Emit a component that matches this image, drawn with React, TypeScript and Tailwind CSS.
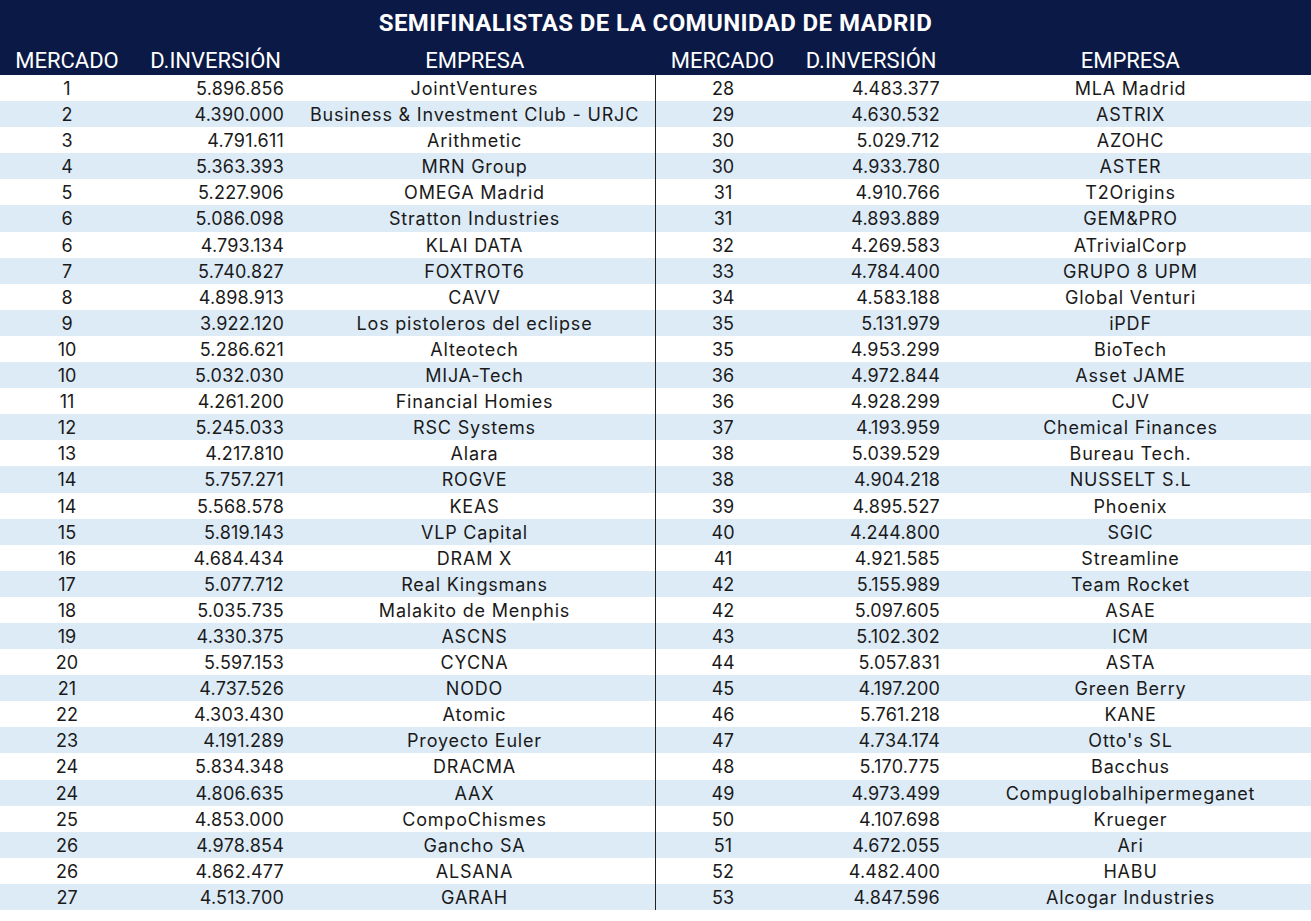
import React from 'react';

type Row = [string, string, string];

const left: Row[] = [
  ['1', '5.896.856', 'JointVentures'],
  ['2', '4.390.000', 'Business & Investment Club - URJC'],
  ['3', '4.791.611', 'Arithmetic'],
  ['4', '5.363.393', 'MRN Group'],
  ['5', '5.227.906', 'OMEGA Madrid'],
  ['6', '5.086.098', 'Stratton Industries'],
  ['6', '4.793.134', 'KLAI DATA'],
  ['7', '5.740.827', 'FOXTROT6'],
  ['8', '4.898.913', 'CAVV'],
  ['9', '3.922.120', 'Los pistoleros del eclipse'],
  ['10', '5.286.621', 'Alteotech'],
  ['10', '5.032.030', 'MIJA-Tech'],
  ['11', '4.261.200', 'Financial Homies'],
  ['12', '5.245.033', 'RSC Systems'],
  ['13', '4.217.810', 'Alara'],
  ['14', '5.757.271', 'ROGVE'],
  ['14', '5.568.578', 'KEAS'],
  ['15', '5.819.143', 'VLP Capital'],
  ['16', '4.684.434', 'DRAM X'],
  ['17', '5.077.712', 'Real Kingsmans'],
  ['18', '5.035.735', 'Malakito de Menphis'],
  ['19', '4.330.375', 'ASCNS'],
  ['20', '5.597.153', 'CYCNA'],
  ['21', '4.737.526', 'NODO'],
  ['22', '4.303.430', 'Atomic'],
  ['23', '4.191.289', 'Proyecto Euler'],
  ['24', '5.834.348', 'DRACMA'],
  ['24', '4.806.635', 'AAX'],
  ['25', '4.853.000', 'CompoChismes'],
  ['26', '4.978.854', 'Gancho SA'],
  ['26', '4.862.477', 'ALSANA'],
  ['27', '4.513.700', 'GARAH'],
];

const right: Row[] = [
  ['28', '4.483.377', 'MLA Madrid'],
  ['29', '4.630.532', 'ASTRIX'],
  ['30', '5.029.712', 'AZOHC'],
  ['30', '4.933.780', 'ASTER'],
  ['31', '4.910.766', 'T2Origins'],
  ['31', '4.893.889', 'GEM&PRO'],
  ['32', '4.269.583', 'ATrivialCorp'],
  ['33', '4.784.400', 'GRUPO 8 UPM'],
  ['34', '4.583.188', 'Global Venturi'],
  ['35', '5.131.979', 'iPDF'],
  ['35', '4.953.299', 'BioTech'],
  ['36', '4.972.844', 'Asset JAME'],
  ['36', '4.928.299', 'CJV'],
  ['37', '4.193.959', 'Chemical Finances'],
  ['38', '5.039.529', 'Bureau Tech.'],
  ['38', '4.904.218', 'NUSSELT S.L'],
  ['39', '4.895.527', 'Phoenix'],
  ['40', '4.244.800', 'SGIC'],
  ['41', '4.921.585', 'Streamline'],
  ['42', '5.155.989', 'Team Rocket'],
  ['42', '5.097.605', 'ASAE'],
  ['43', '5.102.302', 'ICM'],
  ['44', '5.057.831', 'ASTA'],
  ['45', '4.197.200', 'Green Berry'],
  ['46', '5.761.218', 'KANE'],
  ['47', '4.734.174', "Otto's SL"],
  ['48', '5.170.775', 'Bacchus'],
  ['49', '4.973.499', 'Compuglobalhipermeganet'],
  ['50', '4.107.698', 'Krueger'],
  ['51', '4.672.055', 'Ari'],
  ['52', '4.482.400', 'HABU'],
  ['53', '4.847.596', 'Alcogar Industries'],
];

const HalfTable = ({ rows, divider }: { rows: Row[]; divider?: boolean }) => (
  <div className={`flex-1 flex flex-col ${divider ? 'border-l border-[#222]' : ''}`}>
    {rows.map((r, i) => (
      <div
        key={i}
        className={`grid grid-cols-[134px_160px_1fr] h-[26.1px] items-center ${i % 2 === 1 ? 'bg-[#ddebf7]' : 'bg-white'}`}
      >
        <div className="text-center">{r[0]}</div>
        <div className="text-right pr-[10px] tracking-[0.2px]">{r[1]}</div>
        <div className="text-center whitespace-nowrap tracking-[0.8px]">{r[2]}</div>
      </div>
    ))}
  </div>
);

const HeaderHalf = () => (
  <div className="flex-1 grid grid-cols-[134px_160px_1fr] items-center">
    <div className="text-center">MERCADO</div>
    <div className="text-right pr-[13px]">D.INVERSIÓN</div>
    <div className="text-center">EMPRESA</div>
  </div>
);

export default function App() {
  return (
    <div className="w-[1311px] h-[921px] bg-white text-[#1a1a1a] text-[18px] font-['Inter',sans-serif]">
      <div className="bg-[#0b1946] text-white">
        <div className="h-[45px] flex items-center justify-center font-['Roboto',sans-serif] font-bold text-[24px] tracking-[0.4px]">
          SEMIFINALISTAS DE LA COMUNIDAD DE MADRID
        </div>
        <div className="h-[30px] flex font-['Roboto',sans-serif] text-[22px] leading-none pt-[2px]">
          <HeaderHalf />
          <HeaderHalf />
        </div>
      </div>
      <div className="flex">
        <HalfTable rows={left} />
        <HalfTable rows={right} divider />
      </div>
    </div>
  );
}
